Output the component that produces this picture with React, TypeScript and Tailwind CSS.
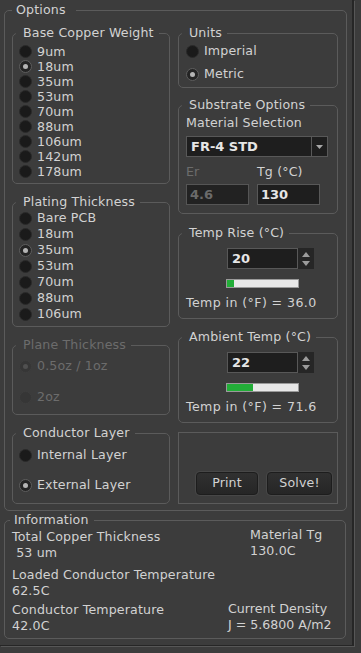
import React from "react";

const TXT = "text-[#d2d2d2]";
const DIS = "text-[#6c6c6c]";

function Group({
  label,
  disabled,
  className = "",
  children,
}: {
  label: string;
  disabled?: boolean;
  className?: string;
  children?: React.ReactNode;
}) {
  return (
    <fieldset className={`border border-[#5b5b5b] rounded-[5px] min-w-0 ${className}`}>
      <legend className={`ml-[3px] pl-[7px] pr-[5px] leading-[16px] ${disabled ? DIS : TXT}`}>{label}</legend>
      {children}
    </fieldset>
  );
}

function Radio({
  label,
  checked,
  disabled,
  h,
}: {
  label: string;
  checked?: boolean;
  disabled?: boolean;
  h: string;
}) {
  return (
    <div className={`flex items-center ${h}`}>
      <div
        className={`w-[13px] h-[13px] rounded-full flex items-center justify-center shrink-0 ${
          disabled
            ? "bg-[#363636] border border-[#3e3e3e]"
            : checked
            ? "bg-[#242424] border border-[#5e5e5e]"
            : "bg-[#1a1a1a] border border-[#2a2a2a]"
        }`}
      >
        {checked && (
          <div className={`w-[5px] h-[5px] rounded-full ${disabled ? "bg-[#505050]" : "bg-[#b4b4b4]"}`} />
        )}
      </div>
      <span className={`ml-[5px] leading-[16px] whitespace-nowrap ${disabled ? DIS : TXT}`}>{label}</span>
    </div>
  );
}

function Spin({ value }: { value: string }) {
  return (
    <div className="flex ml-[48px] h-[21px]">
      <div className="w-[71px] h-[21px] bg-[#1e1e1e] border border-[#585858] flex items-center pl-[4px] font-bold text-[#e6e6e6] text-[13px] tracking-normal">
        {value}
      </div>
      <div className="w-[16px] h-[21px] bg-[#262626] flex flex-col items-center justify-center gap-[4px]">
        <svg width="8" height="5" viewBox="0 0 8 5">
          <path d="M0 5 L4 0 L8 5 Z" fill="#9c9c9c" />
        </svg>
        <svg width="8" height="5" viewBox="0 0 8 5">
          <path d="M0 0 L4 5 L8 0 Z" fill="#9c9c9c" />
        </svg>
      </div>
    </div>
  );
}

function Progress({ fill }: { fill: number }) {
  return (
    <div className="ml-[47px] mt-[10px] w-[73px] h-[9px] bg-[#e8e8e8] border border-[#9a9a9a] flex">
      <div className="h-full bg-[#22ad38]" style={{ width: `${fill}px` }} />
    </div>
  );
}

function Button({ label, w }: { label: string; w: string }) {
  return (
    <div
      className={`${w} h-[23px] rounded-[4px] bg-gradient-to-b from-[#303030] to-[#262626] border border-[#1d1d1d] shadow-[0_0_0_1px_#474747] flex items-center justify-center ${TXT}`}
    >
      {label}
    </div>
  );
}

export default function App() {
  return (
    <div className="w-[361px] h-[653px] bg-[#3c3c3c] font-['DejaVu_Sans',sans-serif] text-[12.6px] tracking-[0.15px] overflow-hidden">
      <div className="w-[354px] h-[646px] border-r-2 border-b border-[#262626] shadow-[1px_1px_0_#575757] pl-[4px] pt-[2px]">
        {/* Options */}
        <fieldset className="border border-[#5b5b5b] rounded-[5px] w-[343px] h-[509px] min-w-0">
          <legend className={`ml-[7px] pl-[4px] pr-[10px] leading-[16px] ${TXT}`}>Options</legend>
          <div className="flex pl-[7px] pt-[7px] gap-[8px]">
            {/* left column */}
            <div className="w-[158px] flex flex-col">
              <Group label="Base Copper Weight" className="h-[159px]">
                <div className="pl-[6px] pt-[3px] flex flex-col">
                  <Radio label="9um" h="h-[15px]" />
                  <Radio label="18um" checked h="h-[15px]" />
                  <Radio label="35um" h="h-[15px]" />
                  <Radio label="53um" h="h-[15px]" />
                  <Radio label="70um" h="h-[15px]" />
                  <Radio label="88um" h="h-[15px]" />
                  <Radio label="106um" h="h-[15px]" />
                  <Radio label="142um" h="h-[15px]" />
                  <Radio label="178um" h="h-[15px]" />
                </div>
              </Group>
              <Group label="Plating Thickness" className="h-[133px] mt-[10px]">
                <div className="pl-[6px] flex flex-col">
                  <Radio label="Bare PCB" h="h-[16px]" />
                  <Radio label="18um" h="h-[16px]" />
                  <Radio label="35um" checked h="h-[16px]" />
                  <Radio label="53um" h="h-[16px]" />
                  <Radio label="70um" h="h-[16px]" />
                  <Radio label="88um" h="h-[16px]" />
                  <Radio label="106um" h="h-[16px]" />
                </div>
              </Group>
              <Group label="Plane Thickness" disabled className="h-[78px] mt-[10px]">
                <div className="pl-[6px] flex flex-col gap-[5px]">
                  <Radio label="0.5oz / 1oz" checked disabled h="h-[26px]" />
                  <Radio label="2oz" disabled h="h-[26px]" />
                </div>
              </Group>
              <Group label="Conductor Layer" className="h-[79px] mt-[10px]">
                <div className="pl-[6px] pt-[1px] flex flex-col gap-[4px]">
                  <Radio label="Internal Layer" h="h-[26px]" />
                  <Radio label="External Layer" checked h="h-[26px]" />
                </div>
              </Group>
            </div>

            {/* right column */}
            <div className="w-[160px] flex flex-col">
              <Group label="Units" className="h-[63px]">
                <div className="pl-[7px] pt-[1px] flex flex-col gap-[5px]">
                  <Radio label="Imperial" h="h-[18px]" />
                  <Radio label="Metric" checked h="h-[18px]" />
                </div>
              </Group>
              <Group label="Substrate Options" className="h-[117px] mt-[9px]">
                <div className="px-[7px] flex flex-col">
                  <div className={`mt-[2px] leading-[16px] ${TXT}`}>Material Selection</div>
                  <div className="mt-[5px] w-[142px] h-[21px] bg-[#1e1e1e] border border-[#585858] flex items-center">
                    <span className="flex-1 pl-[4px] font-bold text-[#e6e6e6] text-[13px] tracking-normal">FR-4 STD</span>
                    <div className="w-[16px] h-full border-l border-[#585858] flex items-center justify-center">
                      <svg width="7" height="4" viewBox="0 0 7 4">
                        <path d="M0 0 L3.5 4 L7 0 Z" fill="#a8a8a8" />
                      </svg>
                    </div>
                  </div>
                  <div className="mt-[7px] flex leading-[16px]">
                    <span className={`w-[71px] ${DIS}`}>Er</span>
                    <span className={TXT}>Tg (°C)</span>
                  </div>
                  <div className="mt-[4px] flex gap-[8px]">
                    <div className="w-[63px] h-[21px] bg-[#222222] border border-[#555] flex items-center pl-[3px] font-bold text-[#6a6a6a] text-[13px] tracking-normal">
                      4.6
                    </div>
                    <div className="w-[63px] h-[21px] bg-[#1e1e1e] border border-[#585858] flex items-center pl-[3px] font-bold text-[#e6e6e6] text-[13px] tracking-normal">
                      130
                    </div>
                  </div>
                </div>
              </Group>
              <Group label="Temp Rise (°C)" className="h-[94px] mt-[11px]">
                <div className="flex flex-col pt-[7px]">
                  <Spin value="20" />
                  <Progress fill={7} />
                  <div className={`mt-[7px] pl-[7px] leading-[16px] tracking-[0.4px] ${TXT}`}>Temp in (°F) = 36.0</div>
                </div>
              </Group>
              <Group label="Ambient Temp (°C)" className="h-[94px] mt-[10px]">
                <div className="flex flex-col pt-[7px]">
                  <Spin value="22" />
                  <Progress fill={26} />
                  <div className={`mt-[7px] pl-[7px] leading-[16px] tracking-[0.4px] ${TXT}`}>Temp in (°F) = 71.6</div>
                </div>
              </Group>
              <div className="mt-[9px] h-[72px] border border-[#5b5b5b] flex items-end justify-end gap-[9px] pr-[5px] pb-[8px]">
                <Button label="Print" w="w-[62px]" />
                <Button label="Solve!" w="w-[65px]" />
              </div>
            </div>
          </div>
        </fieldset>

        {/* Information */}
        <fieldset className="border border-[#5b5b5b] rounded-[5px] w-[342px] h-[127px] mt-[1px] min-w-0">
          <legend className={`ml-[5px] pl-[4px] pr-[5px] leading-[16px] ${TXT}`}>Information</legend>
          <div className={`pl-[7px] flex flex-col leading-[16px] ${TXT}`}>
            <div className="flex mt-[1px]">
              <div className="w-[238px]">
                <div>Total Copper Thickness</div>
                <div className="whitespace-pre"> 53 um</div>
              </div>
              <div className="-mt-[2px]">
                <div>Material Tg</div>
                <div>130.0C</div>
              </div>
            </div>
            <div className="mt-[6px]">
              <div>Loaded Conductor Temperature</div>
              <div>62.5C</div>
            </div>
            <div className="flex mt-[3px]">
              <div className="w-[216px]">
                <div>Conductor Temperature</div>
                <div>42.0C</div>
              </div>
              <div className="-mt-[1px] tracking-normal">
                <div>Current Density</div>
                <div>J = 5.6800 A/m2</div>
              </div>
            </div>
          </div>
        </fieldset>
      </div>
    </div>
  );
}
